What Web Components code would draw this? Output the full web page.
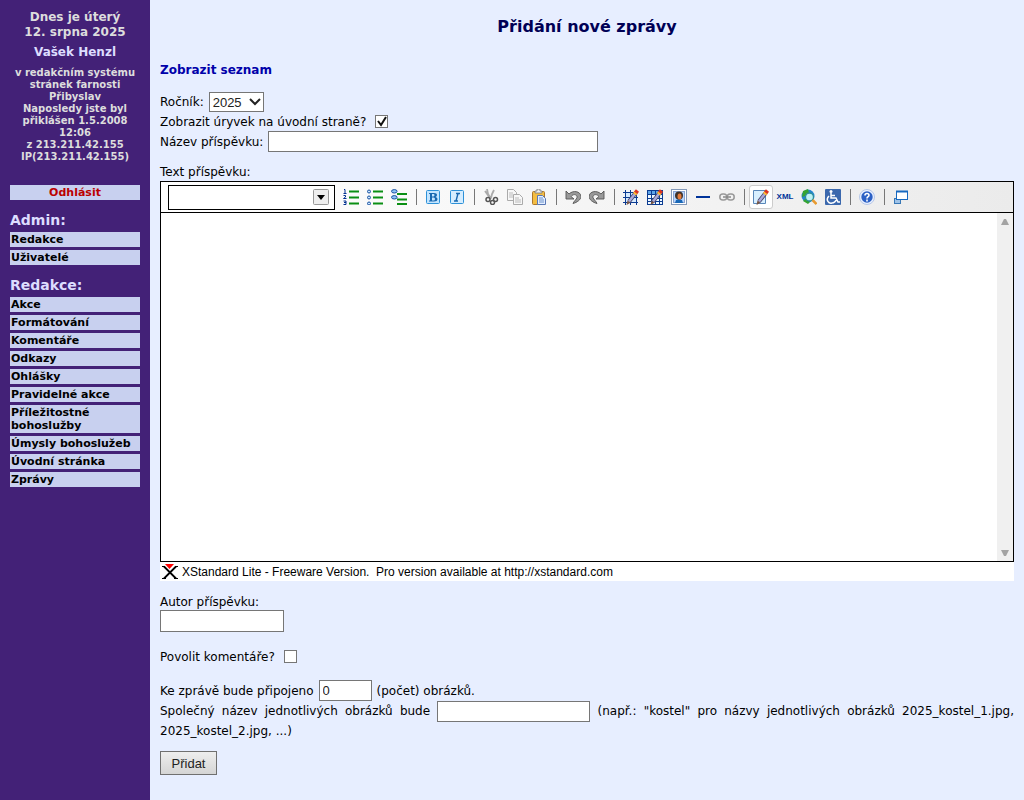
<!DOCTYPE html>
<html lang="cs">
<head>
<meta charset="utf-8">
<meta name="viewport" content="width=device-width, initial-scale=1">
<title>Přidání nové zprávy</title>
<style>
  body { margin: 0; font: 12px/18px "DejaVu Sans", Verdana, sans-serif; color: #000; background: #e7eeff; }
</style>
</head>
<body>
<admin-layout>
  <user-info slot="side"></user-info>
  <side-menu slot="side" label="Admin:">
    <menu-link>Redakce</menu-link>
    <menu-link>Uživatelé</menu-link>
  </side-menu>
  <side-menu slot="side" label="Redakce:">
    <menu-link>Akce</menu-link>
    <menu-link>Formátování</menu-link>
    <menu-link>Komentáře</menu-link>
    <menu-link>Odkazy</menu-link>
    <menu-link>Ohlášky</menu-link>
    <menu-link>Pravidelné akce</menu-link>
    <menu-link>Příležitostné bohoslužby</menu-link>
    <menu-link>Úmysly bohoslužeb</menu-link>
    <menu-link>Úvodní stránka</menu-link>
    <menu-link>Zprávy</menu-link>
  </side-menu>
  <news-form></news-form>
</admin-layout>

<script>
const define = (name, html, setup) => {
  const template = document.createElement('template');
  template.innerHTML = html;
  customElements.define(name, class extends HTMLElement {
    connectedCallback() {
      if (this.shadowRoot) return;
      this.attachShadow({ mode: 'open' }).append(template.content.cloneNode(true));
      if (setup) setup(this, this.shadowRoot);
    }
  });
};

define('admin-layout', `
<style>
  :host { display: flex; min-height: 100vh; }
  aside { box-sizing: border-box; flex: 0 0 150px; padding: 10px; background: #432177; }
  main { flex: 1; min-width: 0; padding: 0 10px 24px; }
</style>
<aside><slot name="side"></slot></aside>
<main><slot></slot></main>`);

define('user-info', `
<style>
  :host { display: block; text-align: center; font-weight: bold; color: #ddd; }
  p { margin: 0; }
  .date { line-height: 15px; }
  .name { margin: 4px 0; line-height: 16px; color: #ddf; }
  .note { margin: 0 -5px; padding-top: 3px; font-size: 10px; line-height: 12px; }
  menu-link { margin-top: 22px; --link-color: #b00; --link-align: center; }
</style>
<p class="date">Dnes je úterý<br>12. srpna 2025</p>
<p class="name">Vašek Henzl</p>
<p class="note">v redakčním systému<br>stránek farnosti<br>Přibyslav<br>Naposledy jste byl<br>přiklášen 1.5.2008<br>12:06<br>z 213.211.42.155<br>IP(213.211.42.155)</p>
<menu-link>Odhlásit</menu-link>`);

define('menu-link', `
<style>
  :host { display: block; }
  a { display: block; padding: 1px; background: #c8d0ef; color: var(--link-color, #000); text-align: var(--link-align, left);
      font-size: 11px; font-weight: bold; line-height: 13px; text-decoration: none; }
</style>
<a href="#"><slot></slot></a>`);

define('side-menu', `
<style>
  :host { display: block; margin-top: 11px; }
  h2 { margin: 0 0 3px; font-size: 14px; line-height: 18px; color: #ddf; }
  nav { display: flex; flex-direction: column; gap: 3px; }
</style>
<h2></h2>
<nav><slot></slot></nav>`,
(host, root) => { root.querySelector('h2').textContent = host.getAttribute('label'); });

const pencil = '<path d="M6 12.500L13 3.500" stroke="#446" stroke-width="4"/><path d="M6 12.500L13 3.500" stroke="#a9a9dc" stroke-width="2.400"/><path d="M11.500 5.300L13 3.500" stroke="#fb3" stroke-width="4"/><path d="M12.700 3.800L14.500 1.500" stroke="#d32" stroke-width="4"/><path d="M4.500 11.400l3 2.300L3.500 16z" fill="#754"/>';
const icons = {
  numbered: '<path d="M6 2.500h10M6 8.500h10M6 14.500h10" stroke="#0a8f14" stroke-width="2"/><path d="M1 .500h1v4M.5 4.500h3M.5 6.500h2v1.500l-2 1.500h3M.5 12h2.500v3.500h-2.500M1 13.500h2" fill="none" stroke="#003090"/>',
  bulleted: '<path d="M6 2.500h10M6 8.500h10M6 14.500h10" stroke="#0a8f14" stroke-width="2"/><g fill="#cde6ff" stroke="#1550a0"><circle cx="2" cy="2.500" r="1.500"/><circle cx="2" cy="8.500" r="1.500"/><circle cx="2" cy="14.500" r="1.500"/></g>',
  definition: '<path d="M6 5h10M6 10.500h10M6 15h10" stroke="#0a8f14" stroke-width="2"/><g fill="#8ec4f5" stroke="#1550a0"><ellipse cx="3.300" cy="2.300" rx="2.800" ry="1.700"/><ellipse cx="3.300" cy="8.300" rx="2.800" ry="1.700"/></g>',
  bold: '<rect x="1.500" y="1.500" width="13" height="13" rx="1" fill="#c3e5ff" stroke="#2d91d8"/><path d="M4 4h5q3 0 3 2 0 1.500-1.500 2 2 .5 2 2 0 2.500-3.500 2.500H4v-1h1V5H4zM7 5v2.500h1.500q1-.2 1-1.200 0-1.300-1-1.300zm0 3.500v3h1.700q1.300 0 1.300-1.500T8.700 8.500z" fill="#1868b0" fill-rule="evenodd"/>',
  italic: '<rect x="1.500" y="1.500" width="13" height="13" rx="1" fill="#d5edff" stroke="#2d91d8"/><path d="M7 4.500h4M5 12h4M9 4.500L7 12" stroke="#1868b0" stroke-width="1.400"/>',
  cut: '<path d="M4 0l1 5 3 5M11 1L9 5 8 9M2 2l5 7" stroke="#aaa" stroke-width="1.800" fill="none"/><g fill="none" stroke="#555" stroke-width="1.500"><circle cx="5" cy="10.500" r="2"/><circle cx="9.500" cy="13.500" r="2"/><circle cx="12.500" cy="10.500" r="2"/></g>',
  copy: '<g fill="#f7f7f7" stroke="#aaa"><path d="M.5.500h6l3 3v8h-9z"/><path d="M6.500 5.500h6l3 3v7h-9z"/></g><path d="M2 4h4M2 6h4M2 8h4M8 9h4M8 11h6M8 13h6" stroke="#bbb"/>',
  paste: '<rect x="1.500" y="2.500" width="12" height="13" rx="1" fill="#f3bd42" stroke="#ac762a"/><path d="M4 2h2V0h3v2h2v2H4z" fill="#eee" stroke="#777" stroke-width=".8"/><path d="M6.500 6.500h5l3 3v6h-8z" fill="#e3eeff" stroke="#5978b5"/><path d="M8 9h4M8 11h5M8 13h5" stroke="#6d92ca"/>',
  undo: '<path d="M1 2v8h8L6 7.500c3-3.500 6.500-1.500 6 1-.5 2-3 3.500-4 6 4-1 8-4 8-7C15.500 2 8 1 4 5z" fill="#999" stroke="#555" stroke-width=".9"/>',
  redo: '<path d="M15 2v8H7l3-2.500C7 4 3.500 6 4 8.500c.5 2 3 3.500 4 6-4-1-8-4-8-7C.500 2 8 1 12 5z" fill="#999" stroke="#555" stroke-width=".9"/>',
  layout: '<rect x="2" y="3" width="12" height="11" fill="#d5eaff"/><path d="M0 3.500h15M0 8.500h15M0 13.500h15M2.500 1v15M7.500 1v15M13.500 1v15" stroke="#0b3b91"/>' + pencil,
  table: '<rect x=".5" y="1.500" width="15" height="14" fill="#eef8ff" stroke="#0b3b91"/><path d="M1 2h14v3H1z" fill="#5da4e8"/><path d="M0 5.500h16M0 9.500h16M0 12.500h16M4.500 2v14M8.500 2v14M12.500 2v14" stroke="#0b3b91"/>' + pencil,
  image: '<rect x=".5" y=".5" width="15" height="15" fill="#fff" stroke="#8298b8"/><rect x="2.500" y="2.500" width="11" height="11" fill="#b5d5ff" stroke="#8ca5d0"/><path d="M4 14l1-3 3-1 3 1 1 3z" fill="#1767b7"/><ellipse cx="8" cy="6.500" rx="4" ry="4" fill="#403229"/><ellipse cx="8.500" cy="7.500" rx="2" ry="3" fill="#e57b3a"/>',
  rule: '<path d="M1 8h14" stroke="#003399" stroke-width="2"/>',
  link: '<g fill="none" stroke="#999" stroke-width="1.500"><rect x=".8" y="5" width="7" height="6" rx="3"/><rect x="8.200" y="5" width="7" height="6" rx="3"/></g><path d="M4 8h8" stroke="#888" stroke-width="1.500"/>',
  edit: '<path d="M.500 1.500h12v13h-12z" fill="#d8efff" stroke="#5987b9"/>' + pencil,
  preview: '<circle cx="7" cy="7" r="6.500" fill="#2385d0"/><path d="M2 2l5-2 1 4-4 3-3 1zM2 12l3-3 4 4-2 2z" fill="#34a432"/><circle cx="8.500" cy="8" r="4" fill="#bdf1f3" stroke="#2b8c9c" stroke-width="1.300"/><path d="M11.500 11l4 4" stroke="#e79b32" stroke-width="2.500"/>',
  access: '<rect width="16" height="16" rx="1" fill="#3b68ad"/><circle cx="6" cy="2.500" r="1.500" fill="#fff"/><path d="M6 4v5h5l2 4h2M6 6.500h4M4 7c-4 4 0 8 3 7 2 0 4-2 4-3" fill="none" stroke="#fff" stroke-width="1.500"/>',
  help: '<circle cx="8" cy="8" r="7.500" fill="#e8f0ff" stroke="#b6c7e8"/><circle cx="8" cy="8" r="5.700" fill="#2c61c5"/><path d="M6 6.500q0-2 2-2t2 1.700q0 1-1 1.500T8 9.500M8 10.500v2" fill="none" stroke="#fff" stroke-width="1.600"/>',
  window: '<rect x="1.500" y="9.500" width="6" height="5" fill="#9fc3e8" stroke="#3978b6"/><rect x="3.500" y="2.500" width="11" height="8" fill="#fff" stroke="#1769c0"/><path d="M3 2.500h12" stroke="#1769c0" stroke-width="2"/>'
};

define('tool-button', `
<style>
  :host { display: block; flex: 0 0 24px; height: 24px; }
  button { box-sizing: border-box; display: grid; place-items: center; width: 24px; height: 24px; margin: 0; padding: 0;
           border: 1px solid transparent; border-radius: 3px; background: none; color: #039;
           font: bold 8px/16px "Liberation Sans", Arial, sans-serif; }
  :host([active]) button { border-color: #ccc; background: #fff; }
  svg { display: block; }
</style>
<button type="button"><slot></slot></button>`,
(host, root) => {
  const name = host.getAttribute('icon');
  const button = root.querySelector('button');
  button.setAttribute('aria-label', host.getAttribute('label'));
  if (name) button.innerHTML = '<svg width="16" height="16" viewBox="0 0 16 16">' + icons[name] + '</svg>';
});

define('tool-divider', `
<style>
  :host { display: block; flex: 0 0 10px; height: 16px; }
  i { display: block; width: 1px; height: 16px; margin: 0 auto; background: #777; }
</style><i></i>`);

define('rich-editor', `
<style>
  :host { display: block; background: #fff; }
  .frame { border: 1px solid #000; }
  .bar { display: flex; align-items: center; height: 30px; padding-left: 7px; border-bottom: 1px solid #000;
         background: linear-gradient(90deg, #fff, #ebebeb); }
  .style { box-sizing: border-box; display: grid; flex: 0 0 167px; height: 25px; margin-right: 4px; border: 1px solid #000; background: #fff; }
  .style select, .style svg { grid-area: 1 / 1; }
  .style select { width: 100%; padding: 0 4px; border: 0; background: none; appearance: none; font: 12px "Liberation Sans", Arial, sans-serif; }
  .style svg { place-self: center end; margin-right: 5px; pointer-events: none; }
  .area { display: flex; min-height: 348px; }
  textarea { flex: 1; min-width: 0; box-sizing: border-box; margin: 0; padding: 4px; border: 0; resize: none; outline: 0; background: #fff; font: inherit; }
  .scroll { display: flex; flex: 0 0 16px; flex-direction: column; justify-content: space-between; align-items: center; padding: 6px 0 5px; box-sizing: border-box; background: #f0f0f0; }
  .foot { display: flex; align-items: center; gap: 4px; height: 19px; padding-left: 2px; font: 12px/18px "Liberation Sans", Arial, sans-serif; white-space: pre; }
</style>
<div class="frame">
  <div class="bar" role="toolbar">
    <div class="style"><select aria-label="Styl"><option></option></select>
      <svg width="16" height="16"><rect x=".5" y=".5" width="15" height="15" rx="1" fill="#eee" stroke="#999"/><path d="M4 6h8l-4 5z"/></svg></div>
    <tool-button icon="numbered" label="Číslovaný seznam"></tool-button>
    <tool-button icon="bulleted" label="Seznam s odrážkami"></tool-button>
    <tool-button icon="definition" label="Seznam definic"></tool-button>
    <tool-divider></tool-divider>
    <tool-button icon="bold" label="Tučně"></tool-button>
    <tool-button icon="italic" label="Kurzíva"></tool-button>
    <tool-divider></tool-divider>
    <tool-button icon="cut" label="Vyjmout"></tool-button>
    <tool-button icon="copy" label="Kopírovat"></tool-button>
    <tool-button icon="paste" label="Vložit"></tool-button>
    <tool-divider></tool-divider>
    <tool-button icon="undo" label="Zpět"></tool-button>
    <tool-button icon="redo" label="Znovu"></tool-button>
    <tool-divider></tool-divider>
    <tool-button icon="layout" label="Rozvržení"></tool-button>
    <tool-button icon="table" label="Tabulka"></tool-button>
    <tool-button icon="image" label="Obrázek"></tool-button>
    <tool-button icon="rule" label="Čára"></tool-button>
    <tool-button icon="link" label="Odkaz"></tool-button>
    <tool-divider></tool-divider>
    <tool-button icon="edit" label="Úpravy" active></tool-button>
    <tool-button label="XML">XML</tool-button>
    <tool-button icon="preview" label="Náhled"></tool-button>
    <tool-button icon="access" label="Přístupnost"></tool-button>
    <tool-divider></tool-divider>
    <tool-button icon="help" label="Nápověda"></tool-button>
    <tool-divider></tool-divider>
    <tool-button icon="window" label="Okno"></tool-button>
  </div>
  <div class="area">
    <textarea aria-label="Text příspěvku"></textarea>
    <div class="scroll">
      <svg width="8" height="6"><path d="M0 6L3 0h2l3 6z" fill="#a3a3a3"/></svg>
      <svg width="8" height="6"><path d="M0 0h8L5 6H3z" fill="#a3a3a3"/></svg>
    </div>
  </div>
</div>
<div class="foot"><svg width="16" height="16" viewBox="0 0 16 16"><path d="M2 2.500l12 12M14 2.500L2 14.500" stroke="#000" stroke-width="1.800"/><path d="M0 14.500h4M12 14.500h4M0 2.500h3M13 2.500h3" stroke="#000"/><path d="M3 0h9L7.500 5z" fill="red"/></svg><span>XStandard Lite - Freeware Version.  Pro version available at http://xstandard.com</span></div>`);

define('news-form', `
<style>
  :host { display: block; }
  h1 { margin: 0; padding: 17px 0 24px; font-size: 16px; line-height: 20px; text-align: center; color: #005; }
  .list { margin: 0 0 13px; line-height: 18px; }
  .list a { font-weight: bold; color: #00a; text-decoration: none; }
  .row { display: flex; align-items: center; gap: 5px; }
  .tick { gap: 9px; height: 19px; }
  .tick label { align-self: flex-end; }
  label { line-height: 18px; }
  .block { display: block; }
  .text { margin-top: 11px; }
  .author { margin-top: 13px; line-height: 16px; }
  input, select { box-sizing: border-box; margin: 0; border: 1px solid #767676; border-radius: 0; background: #fff; color: #222;
                  font: 13px "Liberation Sans", Arial, sans-serif; }
  input { height: 21px; padding: 1px 3px; vertical-align: middle; }
  .year { display: grid; width: 55px; height: 20px; }
  .year select, .year svg { grid-area: 1 / 1; }
  .year select { width: 55px; height: 20px; padding: 0 3px; appearance: none; }
  .year svg { place-self: center end; margin-right: 3px; pointer-events: none; }
  .box { display: grid; width: 13px; height: 13px; }
  .box input, .box svg { grid-area: 1 / 1; }
  .box input { width: 13px; height: 13px; padding: 0; appearance: none; }
  .box svg { display: none; pointer-events: none; }
  .box input:checked + svg { display: block; }
  #title { flex: 0 1 330px; min-width: 0; }
  #author { display: block; width: 124px; height: 22px; }
  .comments { margin-top: 15px; }
  .count { margin-top: 14px; }
  #count { width: 53px; }
  #base { width: 153px; }
  p.names { margin: 0 0 11px; text-align: justify; }
  button { display: block; box-sizing: border-box; width: 57px; height: 24px; margin: 0; padding: 0; border: 1px solid #707070; border-radius: 0;
           background: linear-gradient(#eee, #d5d5d5); color: #222; font: 13px "Liberation Sans", Arial, sans-serif; }
</style>
<h1>Přidání nové zprávy</h1>
<p class="list"><a href="#">Zobrazit seznam</a></p>
<form>
  <div class="row"><label for="year">Ročník:</label>
    <span class="year"><select id="year"><option>2025</option></select><svg width="12" height="8"><path d="M1 1l5 5 5-5" fill="none" stroke="#222" stroke-width="2"/></svg></span></div>
  <div class="row tick"><label for="excerpt">Zobrazit úryvek na úvodní straně?</label>
    <span class="box"><input type="checkbox" id="excerpt" checked><svg width="13" height="13"><path d="M3 6l3 4 5-8" fill="none" stroke="#111" stroke-width="2"/></svg></span></div>
  <div class="row"><label for="title">Název příspěvku:</label><input type="text" id="title"></div>
  <label class="block text">Text příspěvku:</label>
  <rich-editor></rich-editor>
  <label class="block author" for="author">Autor příspěvku:</label>
  <input type="text" id="author">
  <div class="row tick comments"><label for="comments">Povolit komentáře?</label>
    <span class="box"><input type="checkbox" id="comments"></span></div>
  <div class="row count"><label for="count">Ke zprávě bude připojeno</label><input type="text" id="count" value="0"><span>(počet) obrázků.</span></div>
  <p class="names"><label for="base">Společný název jednotlivých obrázků bude</label> <input type="text" id="base"> <span>(např.: "kostel" pro názvy jednotlivých obrázků</span> <span>2025_kostel_1.jpg,</span> <span>2025_kostel_2.jpg, ...)</span></p>
  <button type="button">Přidat</button>
</form>`);
</script>
</body>
</html>
